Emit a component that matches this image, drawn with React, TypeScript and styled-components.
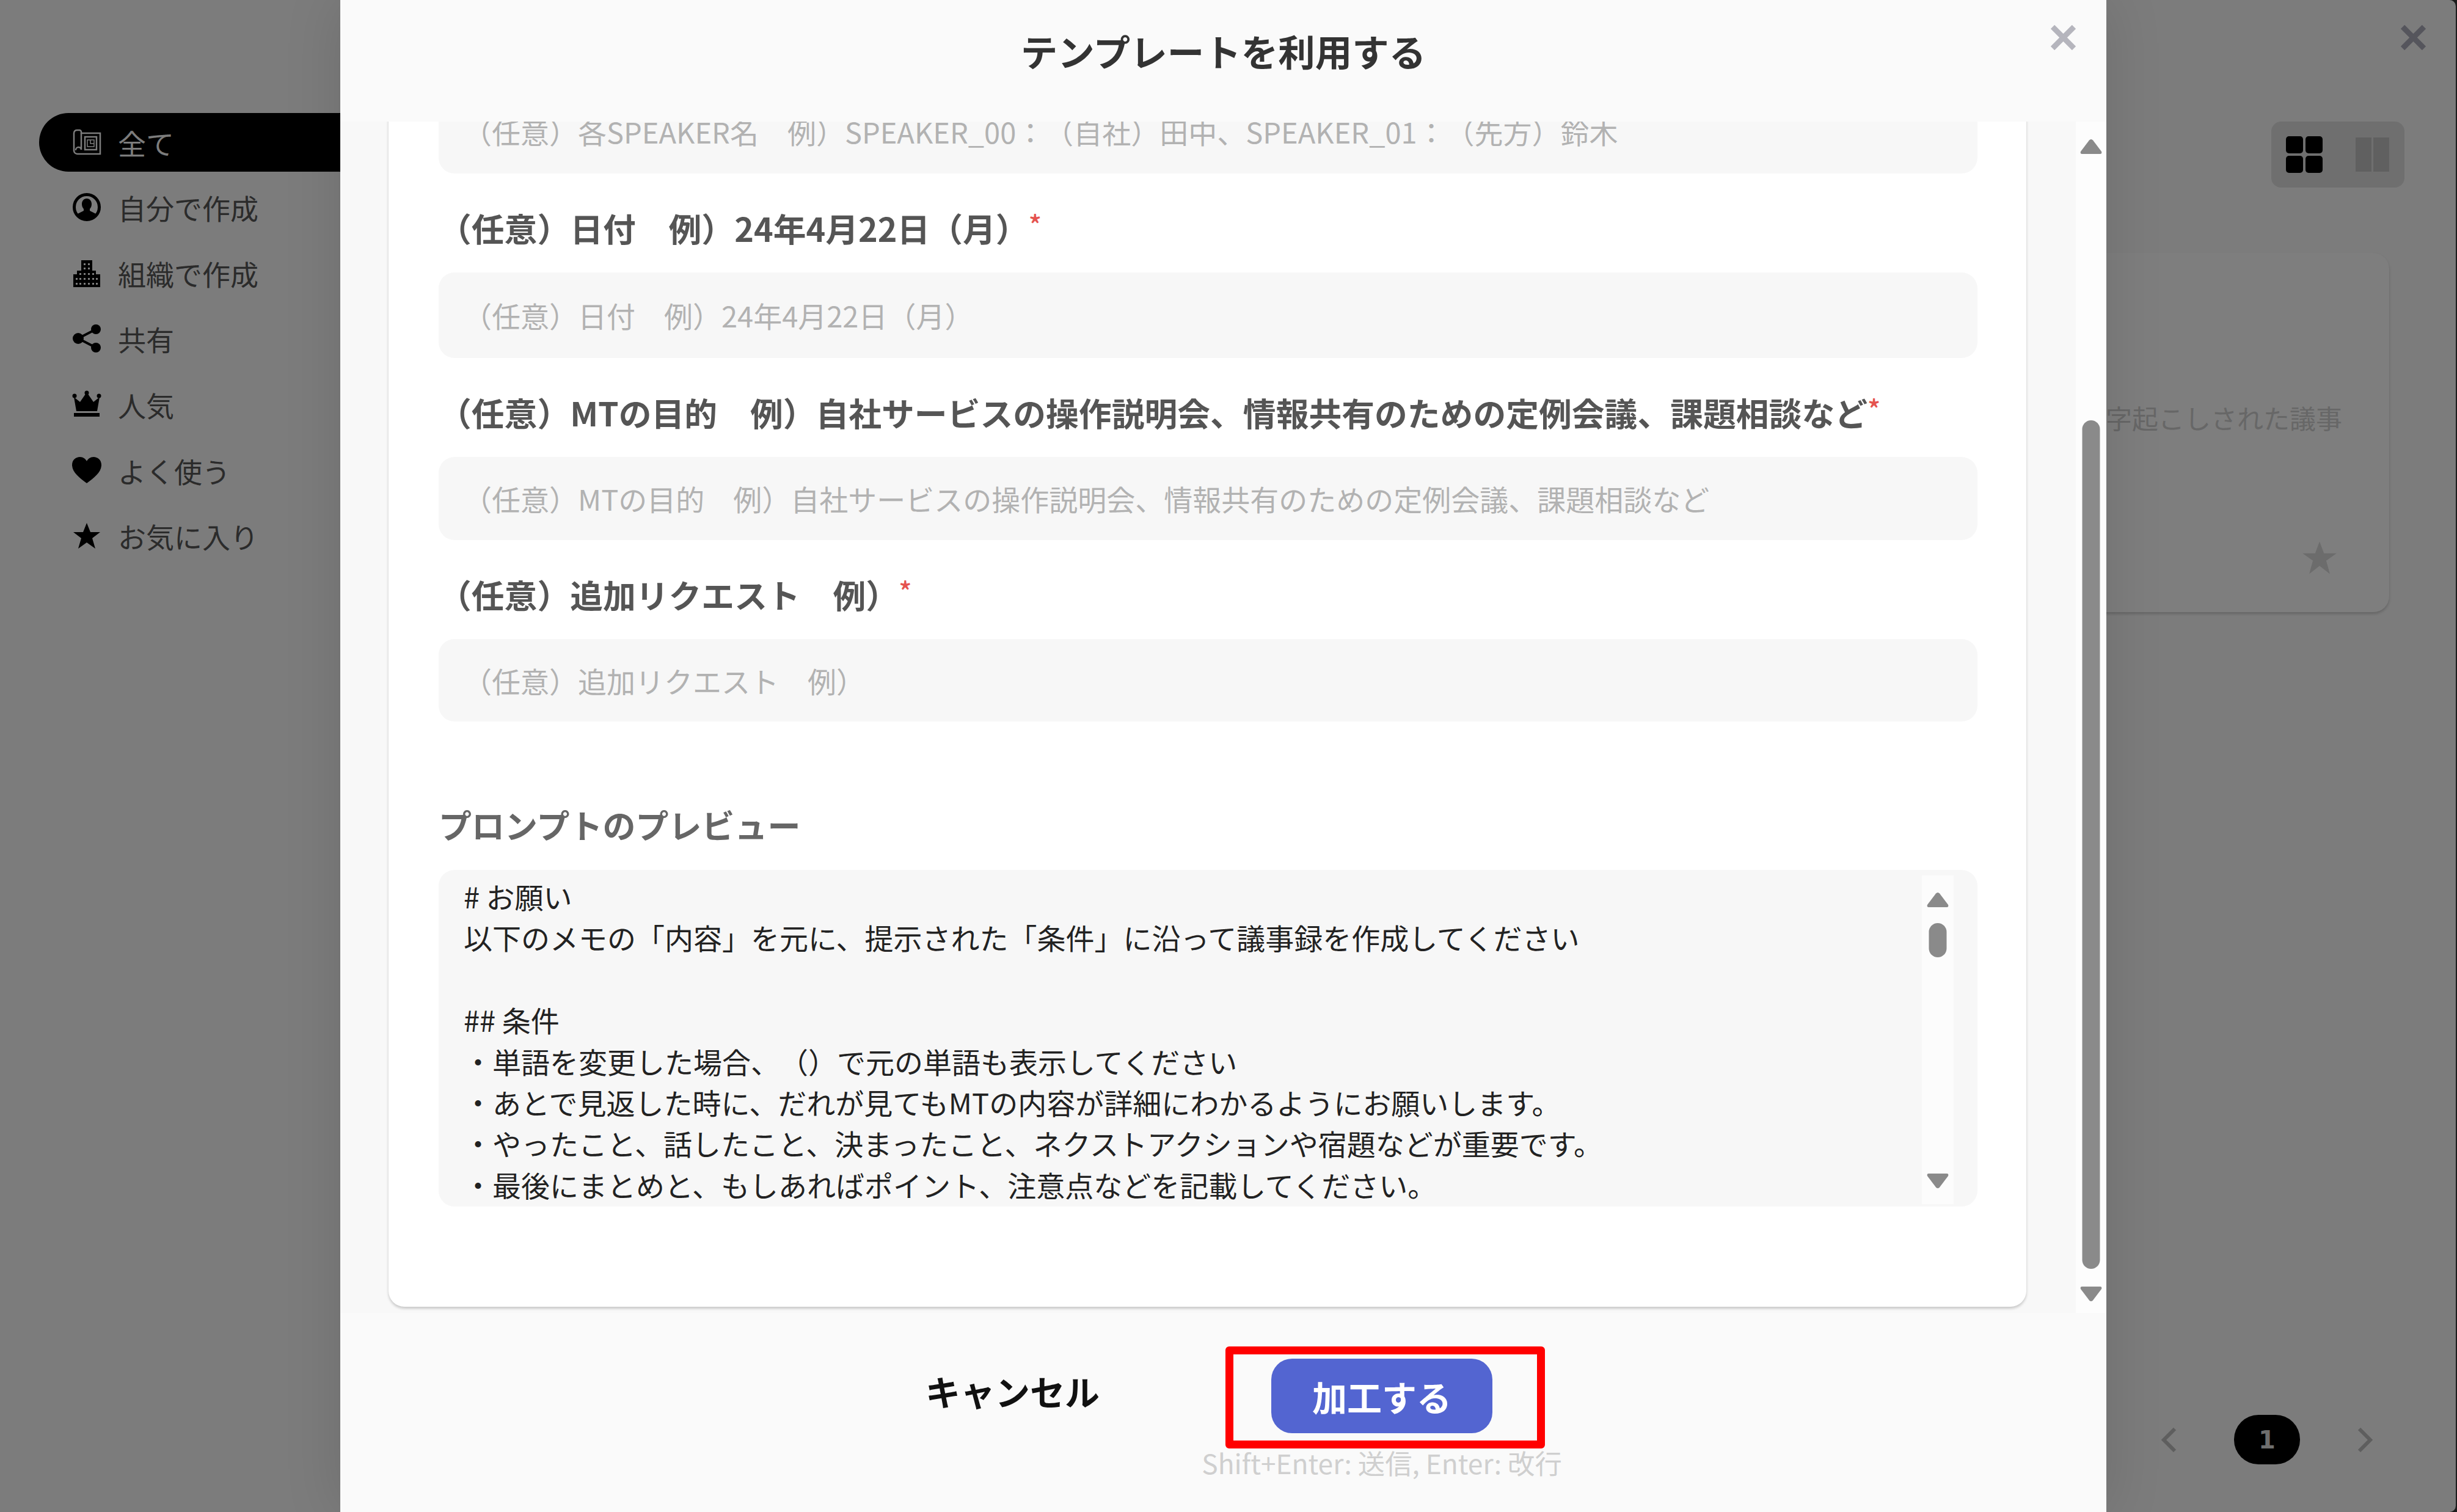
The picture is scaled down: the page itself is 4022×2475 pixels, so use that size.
import React from 'react'
import styled, { createGlobalStyle } from 'styled-components'

const GlobalStyle = createGlobalStyle`
  html, body {
    margin: 0;
    padding: 0;
    background: #1c1c1c;
  }
  body {
    font-family: 'Noto Sans CJK JP', 'Noto Sans', sans-serif;
    text-spacing-trim: space-all;
  }
`

const Shell = styled.div`
  display: flex;
  flex-flow: row nowrap;
  width: 4020px;
  height: 2475px;
  overflow: hidden;
  background: #7c7c7c;
  border-radius: 0 10px 10px 0;
`

const Sidebar = styled.nav`
  display: flex;
  flex-direction: column;
  width: 557px;
  flex: none;
  padding: 179px 0 0 64px;
  box-sizing: border-box;
`

const NavRow = styled.div<{ $active?: boolean }>`
  display: flex;
  align-items: center;
  gap: 27px;
  height: ${(p) => (p.$active ? '96px' : '107.7px')};
  margin: ${(p) => (p.$active ? '6px 0 4px' : '0')};
  padding-left: 54px;
  font-size: 46px;
  color: ${(p) => (p.$active ? '#7c7c7c' : '#2b2b2b')};
  background: ${(p) => (p.$active ? '#000' : 'transparent')};
  border-radius: 48px 0 0 48px;
`

const NavGlyph = styled.svg<{ $active?: boolean }>`
  width: 48px;
  height: 48px;
  flex: none;
  color: ${(p) => (p.$active ? '#7c7c7c' : '#000')};
`

const Modal = styled.section`
  position: relative;
  display: flex;
  flex-direction: column;
  width: 2891px;
  height: 2475px;
  flex: none;
  background: #fafafa;
  box-shadow: 0 0 90px rgba(0, 0, 0, 0.12);
  z-index: 2;
`

const ModalHeader = styled.header`
  display: flex;
  justify-content: center;
  height: 199px;
  flex: none;
  padding-top: 40px;
  box-sizing: border-box;
  font-size: 60.5px;
  font-weight: 700;
  line-height: 86px;
  color: #333;
`

const CloseMark = styled.svg<{ $tone: string; $right: number }>`
  position: absolute;
  top: 41px;
  right: ${(p) => p.$right}px;
  width: 41px;
  height: 41px;
  color: ${(p) => p.$tone};
`

const ModalBody = styled.div`
  display: flex;
  flex-flow: row nowrap;
  height: 1950px;
  flex: none;
  overflow: hidden;
  background: #f8f8f8;
`

const Gutter = styled.div`
  width: 79px;
  flex: none;
`

const FormCard = styled.div`
  width: 2681px;
  height: 1994px;
  flex: none;
  margin-top: -54px;
  padding: 0 80px 0 82px;
  box-sizing: border-box;
  background: #fff;
  border-radius: 0 0 26px 26px;
  box-shadow: 0 3px 4px rgba(0, 0, 0, 0.2);
`

const FieldLabel = styled.div`
  display: flex;
  align-items: center;
  height: 162px;
  padding-top: 15px;
  box-sizing: border-box;
  font-size: 53.8px;
  font-weight: 700;
  color: #555;
  white-space: nowrap;
`

const Required = styled.sup`
  align-self: flex-start;
  margin: 45px 0 0 0;
  font-size: 44px;
  font-weight: 500;
  line-height: 1;
  color: #e5534f;
`

const FieldInput = styled.div<{ $height: number }>`
  display: flex;
  align-items: center;
  height: ${(p) => p.$height}px;
  padding-left: 40px;
  box-sizing: border-box;
  font-size: 47px;
  line-height: 38px;
  color: #b2b2b2;
  background: #f7f7f7;
  border-radius: 26px;
  white-space: nowrap;
`

const PreviewTitle = styled.div`
  display: flex;
  align-items: flex-end;
  height: 207px;
  margin-bottom: 36px;
  box-sizing: border-box;
  font-size: 54px;
  font-weight: 700;
  line-height: 76px;
  color: #666;
`

const PreviewBox = styled.div`
  position: relative;
  height: 551px;
  overflow: hidden;
  padding: 9px 0 0 41px;
  box-sizing: border-box;
  background: #f7f7f7;
  border-radius: 26px;
`

const PreviewLine = styled.div`
  height: 67.4px;
  font-size: 47px;
  line-height: 67px;
  color: #222;
  white-space: pre;
`

const InnerTrack = styled.div`
  position: absolute;
  top: 9px;
  bottom: 4px;
  right: 39px;
  width: 52px;
  background: #fcfcfc;
`

const ArrowMark = styled.svg<{ $top?: number; $bottom?: number }>`
  position: absolute;
  left: 50%;
  width: 36px;
  height: 26px;
  transform: translateX(-50%);
  color: #8a8a8a;
  ${(p) => (p.$top !== undefined ? `top: ${p.$top}px;` : '')}
  ${(p) => (p.$bottom !== undefined ? `bottom: ${p.$bottom}px;` : '')}
`

const ScrollThumb = styled.div<{ $top: number; $height: number; $width: number }>`
  position: absolute;
  left: 50%;
  top: ${(p) => p.$top}px;
  width: ${(p) => p.$width}px;
  height: ${(p) => p.$height}px;
  transform: translateX(-50%);
  background: #8a8a8a;
  border-radius: ${(p) => p.$width / 2}px;
`

const OuterGap = styled.div`
  width: 81px;
  flex: none;
`

const OuterTrack = styled.div`
  position: relative;
  width: 50px;
  flex: none;
  background: #fdfdfd;
`

const ModalFooter = styled.footer`
  display: flex;
  flex-flow: row nowrap;
  flex: 1;
  padding-left: 958px;
`

const CancelLabel = styled.div`
  width: 283px;
  margin-top: 86px;
  font-size: 57px;
  font-weight: 700;
  line-height: 82px;
  color: #111;
  white-space: nowrap;
`

const ActionColumn = styled.div`
  display: flex;
  flex-direction: column;
  align-items: center;
  width: 584px;
  margin-left: 172px;
  padding-top: 75px;
`

const ActionWrap = styled.div`
  position: relative;
`

const SubmitButton = styled.button`
  display: block;
  width: 362px;
  height: 122px;
  padding: 0;
  border: none;
  border-radius: 34px;
  background: #5365d1;
  font-family: inherit;
  font-size: 57px;
  font-weight: 700;
  color: #fff;
`

const Highlight = styled.div`
  position: absolute;
  top: -20px;
  bottom: -25px;
  left: -75px;
  right: -86px;
  border: 13px solid #ff0000;
  border-radius: 6px;
  pointer-events: none;
`

const HintText = styled.div`
  margin-top: 18px;
  font-size: 44.3px;
  line-height: 60px;
  color: #cfcfcf;
  white-space: nowrap;
`

const BackPane = styled.aside`
  position: relative;
  display: flex;
  flex-direction: column;
  width: 572px;
  flex: none;
  overflow: hidden;
`

const ViewToggle = styled.div`
  display: flex;
  align-items: center;
  gap: 54px;
  align-self: flex-end;
  width: 218px;
  height: 108px;
  margin: 199px 84px 0 0;
  padding-left: 24px;
  box-sizing: border-box;
  background: #6f6f6f;
  border-radius: 16px;
`

const ToggleGlyph = styled.svg`
  width: 60px;
  height: 60px;
  flex: none;
`

const BackCard = styled.div`
  display: flex;
  flex-direction: column;
  align-items: flex-end;
  height: 588px;
  margin: 107px 109px 0 -200px;
  box-sizing: border-box;
  background: #7e7e7e;
  border-radius: 26px;
  box-shadow: 0 3px 4px rgba(0, 0, 0, 0.18);
`

const BackCardText = styled.div`
  margin: 238px 77px 0 0;
  font-size: 43px;
  line-height: 62px;
  color: #676767;
  white-space: nowrap;
`

const BackStar = styled.svg`
  width: 58px;
  height: 58px;
  margin: auto 85px 60px 0;
  color: #6c6c6c;
`

const Pagination = styled.div`
  display: flex;
  align-items: center;
  gap: 94px;
  margin: auto 0 78px 90px;
`

const PageChevron = styled.svg`
  width: 25px;
  height: 40px;
  flex: none;
  color: #5e5e5e;
`

const PageBadge = styled.div`
  display: flex;
  align-items: center;
  justify-content: center;
  width: 108px;
  height: 81px;
  background: #000;
  border-radius: 40px;
  font-family: 'DejaVu Sans', sans-serif;
  font-size: 40px;
  font-weight: 700;
  color: #6f6f6f;
`

const NAV_ITEMS = [
  { key: 'all', label: '全て' },
  { key: 'mine', label: '自分で作成' },
  { key: 'org', label: '組織で作成' },
  { key: 'share', label: '共有' },
  { key: 'crown', label: '人気' },
  { key: 'heart', label: 'よく使う' },
  { key: 'star', label: 'お気に入り' },
]

const FIELDS = [
  {
    label: '（任意）日付　例）24年4月22日（月）',
    height: 140,
  },
  {
    label: '（任意）MTの目的　例）自社サービスの操作説明会、情報共有のための定例会議、課題相談など',
    height: 136,
  },
  {
    label: '（任意）追加リクエスト　例）',
    height: 135,
  },
]

const PREVIEW_LINES = [
  '# お願い',
  '以下のメモの「内容」を元に、提示された「条件」に沿って議事録を作成してください',
  ' ',
  '## 条件',
  '・単語を変更した場合、（）で元の単語も表示してください',
  '・あとで見返した時に、だれが見てもMTの内容が詳細にわかるようにお願いします。',
  '・やったこと、話したこと、決まったこと、ネクストアクションや宿題などが重要です。',
  '・最後にまとめと、もしあればポイント、注意点などを記載してください。',
]

const NavIcon = ({ name, active }: { name: string; active?: boolean }) => {
  return (
    <NavGlyph viewBox="0 0 48 48" $active={active}>
      {name === 'all' && (
        <g fill="none" stroke="currentColor" strokeWidth="2.5">
          <path d="M9 4h3a3 3 0 0 1 3 3v2h31v34H9a6 6 0 0 1-6-5V9a5 5 0 0 1 6-5z" />
          <path d="M15 9v27a4 4 0 0 0-9 1" />
          <rect x="21" y="15" width="19" height="21" />
          <path d="M25 20h11v11H25zM30 20v6h6" strokeWidth="1.5" />
        </g>
      )}
      {name === 'mine' && (
        <g>
          <circle cx="24" cy="24" r="20.5" fill="none" stroke="currentColor" strokeWidth="5" />
          <path
            fill="currentColor"
            d="M24 10c5 0 8 4 8 9 0 3-1 6-3 8v3l10 5c-3 6-9 9-15 9s-12-3-15-9l10-5v-3c-2-2-3-5-3-8 0-5 3-9 8-9z"
          />
        </g>
      )}
      {name === 'org' && (
        <path
          fill="currentColor"
          fillRule="evenodd"
          d="M15 3h18v17h6v6h7v21H2V26h6v-6h7zM19 8v3h3V8zm7 0v3h3V8zM19 15v3h3v-3zm7 0v3h3v-3zM12 24v3h3v-3zm7 0v3h3v-3zm7 0v3h3v-3zm7 0v3h3v-3zM6 32v3h3v-3zm6 0v3h3v-3zm7 0v3h3v-3zm7 0v3h3v-3zm7 0v3h3v-3zm6 0v3h3v-3zM6 40v3h3v-3zm6 0v3h3v-3zm7 0v3h3v-3zm7 0v3h3v-3zm7 0v3h3v-3zm6 0v3h3v-3z"
        />
      )}
      {name === 'share' && (
        <g fill="currentColor">
          <circle cx="10" cy="24" r="9" />
          <circle cx="39" cy="9" r="8" />
          <circle cx="39" cy="39" r="8" />
          <path d="M10 24L39 9M10 24l29 15" stroke="currentColor" strokeWidth="4" />
        </g>
      )}
      {name === 'crown' && (
        <g fill="currentColor">
          <circle cx="4" cy="10" r="3.5" />
          <circle cx="24" cy="5" r="3.5" />
          <circle cx="44" cy="10" r="3.5" />
          <path d="M3 12l10 8 9-13h4l9 13 10-8-4 23H7z" />
          <rect x="3" y="38" width="42" height="6" />
        </g>
      )}
      {name === 'heart' && (
        <path
          fill="currentColor"
          d="M24 45C12 36 0 27 0 15 0 7 6 2 13 2c5 0 9 3 11 7 2-4 6-7 11-7 7 0 13 5 13 13 0 12-12 21-24 30z"
        />
      )}
      {name === 'star' && (
        <path fill="currentColor" d="M24 3l6 15h16L33 28l5 17-14-10-14 10 5-17L2 18h16z" />
      )}
    </NavGlyph>
  )
}

const CrossIcon = ({ tone, right }: { tone: string; right: number }) => (
  <CloseMark viewBox="0 0 41 41" $tone={tone} $right={right}>
    <path d="M3 3l35 35M38 3L3 38" stroke="currentColor" strokeWidth="9" fill="none" />
  </CloseMark>
)

const UpArrow = ({ top }: { top: number }) => (
  <ArrowMark viewBox="0 0 36 26" $top={top}>
    <path fill="currentColor" d="M18 1c1 0 2 .5 3 1.500L35 21c1 2 0 4-2 4H3c-2 0-3-2-2-4L15 2.500C16 1.500 17 1 18 1z" />
  </ArrowMark>
)

const DownArrow = ({ bottom }: { bottom: number }) => (
  <ArrowMark viewBox="0 0 36 26" $bottom={bottom}>
    <path fill="currentColor" d="M18 25c1 0 2-.5 3-1.500L35 5c1-2 0-4-2-4H3C1 1 0 3 1 5l14 18.500c1 1 2 1.500 3 1.500z" />
  </ArrowMark>
)

const App: React.FunctionComponent = () => {
  return (
    <>
      <GlobalStyle />
      <Shell>
        <Sidebar>
          {NAV_ITEMS.map((item, i) => (
            <NavRow key={item.key} $active={i === 0}>
              <NavIcon name={item.key} active={i === 0} />
              <span>{item.label}</span>
            </NavRow>
          ))}
        </Sidebar>

        <Modal>
          <ModalHeader>テンプレートを利用する</ModalHeader>
          <CrossIcon tone="#b5b5bd" right={50} />

          <ModalBody>
            <Gutter />
            <FormCard>
              <FieldInput $height={139}>
                （任意）各SPEAKER名　例）SPEAKER_00：（自社）田中、SPEAKER_01：（先方）鈴木
              </FieldInput>
              {FIELDS.map((field) => (
                <div key={field.label}>
                  <FieldLabel>
                    {field.label}
                    <Required>*</Required>
                  </FieldLabel>
                  <FieldInput $height={field.height}>{field.label}</FieldInput>
                </div>
              ))}
              <PreviewTitle>プロンプトのプレビュー</PreviewTitle>
              <PreviewBox>
                {PREVIEW_LINES.map((line, i) => (
                  <PreviewLine key={i}>{line}</PreviewLine>
                ))}
                <InnerTrack>
                  <UpArrow top={27} />
                  <ScrollThumb $top={78} $height={56} $width={29} />
                  <DownArrow bottom={25} />
                </InnerTrack>
              </PreviewBox>
            </FormCard>
            <OuterGap />
            <OuterTrack>
              <UpArrow top={28} />
              <ScrollThumb $top={489} $height={1389} $width={29} />
              <DownArrow bottom={18} />
            </OuterTrack>
          </ModalBody>

          <ModalFooter>
            <CancelLabel>キャンセル</CancelLabel>
            <ActionColumn>
              <ActionWrap>
                <SubmitButton>加工する</SubmitButton>
                <Highlight />
              </ActionWrap>
              <HintText>Shift+Enter: 送信, Enter: 改行</HintText>
            </ActionColumn>
          </ModalFooter>
        </Modal>

        <BackPane>
          <CrossIcon tone="#55555c" right={49} />
          <ViewToggle>
            <ToggleGlyph viewBox="0 0 60 60">
              <rect x="0" y="0" width="28" height="28" rx="5" fill="#000" />
              <rect x="32" y="0" width="28" height="28" rx="5" fill="#000" />
              <rect x="0" y="32" width="28" height="28" rx="5" fill="#000" />
              <rect x="32" y="32" width="28" height="28" rx="5" fill="#000" />
            </ToggleGlyph>
            <ToggleGlyph viewBox="0 0 60 60">
              <rect x="0" y="2" width="26" height="56" fill="#606060" />
              <rect x="29" y="2" width="26" height="56" fill="#606060" />
            </ToggleGlyph>
          </ViewToggle>
          <BackCard>
            <BackCardText>文字起こしされた議事</BackCardText>
            <BackStar viewBox="0 0 48 48">
              <path fill="currentColor" d="M24 2l6 16h17L33 28l5 18-14-11-14 11 5-18L1 18h17z" />
            </BackStar>
          </BackCard>
          <Pagination>
            <PageChevron viewBox="0 0 25 40">
              <path d="M22 2L4 20l18 18" fill="none" stroke="currentColor" strokeWidth="6" />
            </PageChevron>
            <PageBadge>1</PageBadge>
            <PageChevron viewBox="0 0 25 40">
              <path d="M3 2l18 18L3 38" fill="none" stroke="currentColor" strokeWidth="6" />
            </PageChevron>
          </Pagination>
        </BackPane>
      </Shell>
    </>
  )
}

export default App
